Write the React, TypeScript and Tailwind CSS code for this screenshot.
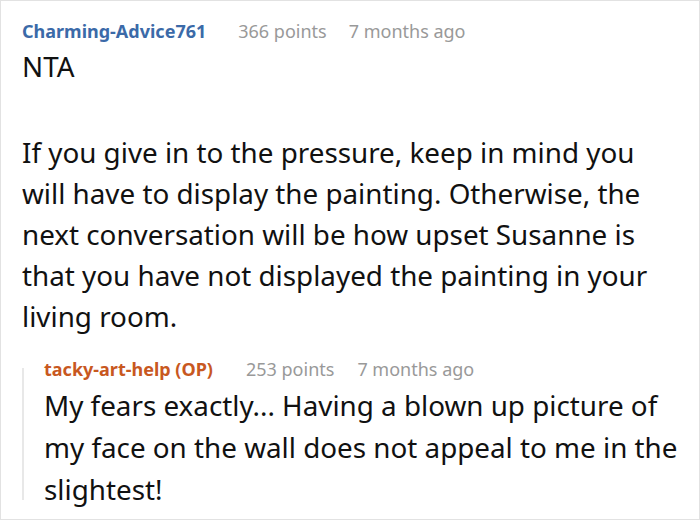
export default function App() {
  return (
    <div className="w-[700px] h-[520px] overflow-hidden bg-white border border-[#e2e2e2] pl-[21px] pr-[18px] pt-[17px] font-['Noto_Sans',sans-serif]">
      <div className="flex items-baseline gap-[32px] text-[18px] leading-[26px]">
        <span className="font-bold text-[#3b6aa8]">Charming-Advice761</span>
        <span className="text-[#999999]">366 points</span>
        <span className="text-[#999999] -ml-[10px]">7 months ago</span>
      </div>
      <div className="text-[27.8px] leading-[41px] text-[#111111] mt-[2px]">
        <p>NTA</p>
        <p className="mt-[45px]">
          If you give in to the pressure, keep in mind you will have to display the painting. Otherwise, the next
          conversation will be how upset Susanne is that you have not displayed the painting in your living room.
        </p>
      </div>
      <div className="mt-[19px] flex">
        {/* reply thread line */}
        <div className="w-[2px] shrink-0 bg-[#e8e8e8] mt-[12px] mb-[10px]" />
        <div className="pl-[20px]">
          <div className="flex items-baseline gap-[33px] text-[18px] leading-[26px]">
            <span className="font-bold text-[#c8581f]">tacky-art-help (OP)</span>
            <span className="text-[#999999]">253 points</span>
            <span className="text-[#999999] -ml-[10px]">7 months ago</span>
          </div>
          <p className="text-[27.8px] leading-[42px] text-[#111111] mt-[2px]">
            My fears exactly... Having a blown up picture of my face on the wall does not appeal to me in the slightest!
          </p>
        </div>
      </div>
    </div>
  );
}
